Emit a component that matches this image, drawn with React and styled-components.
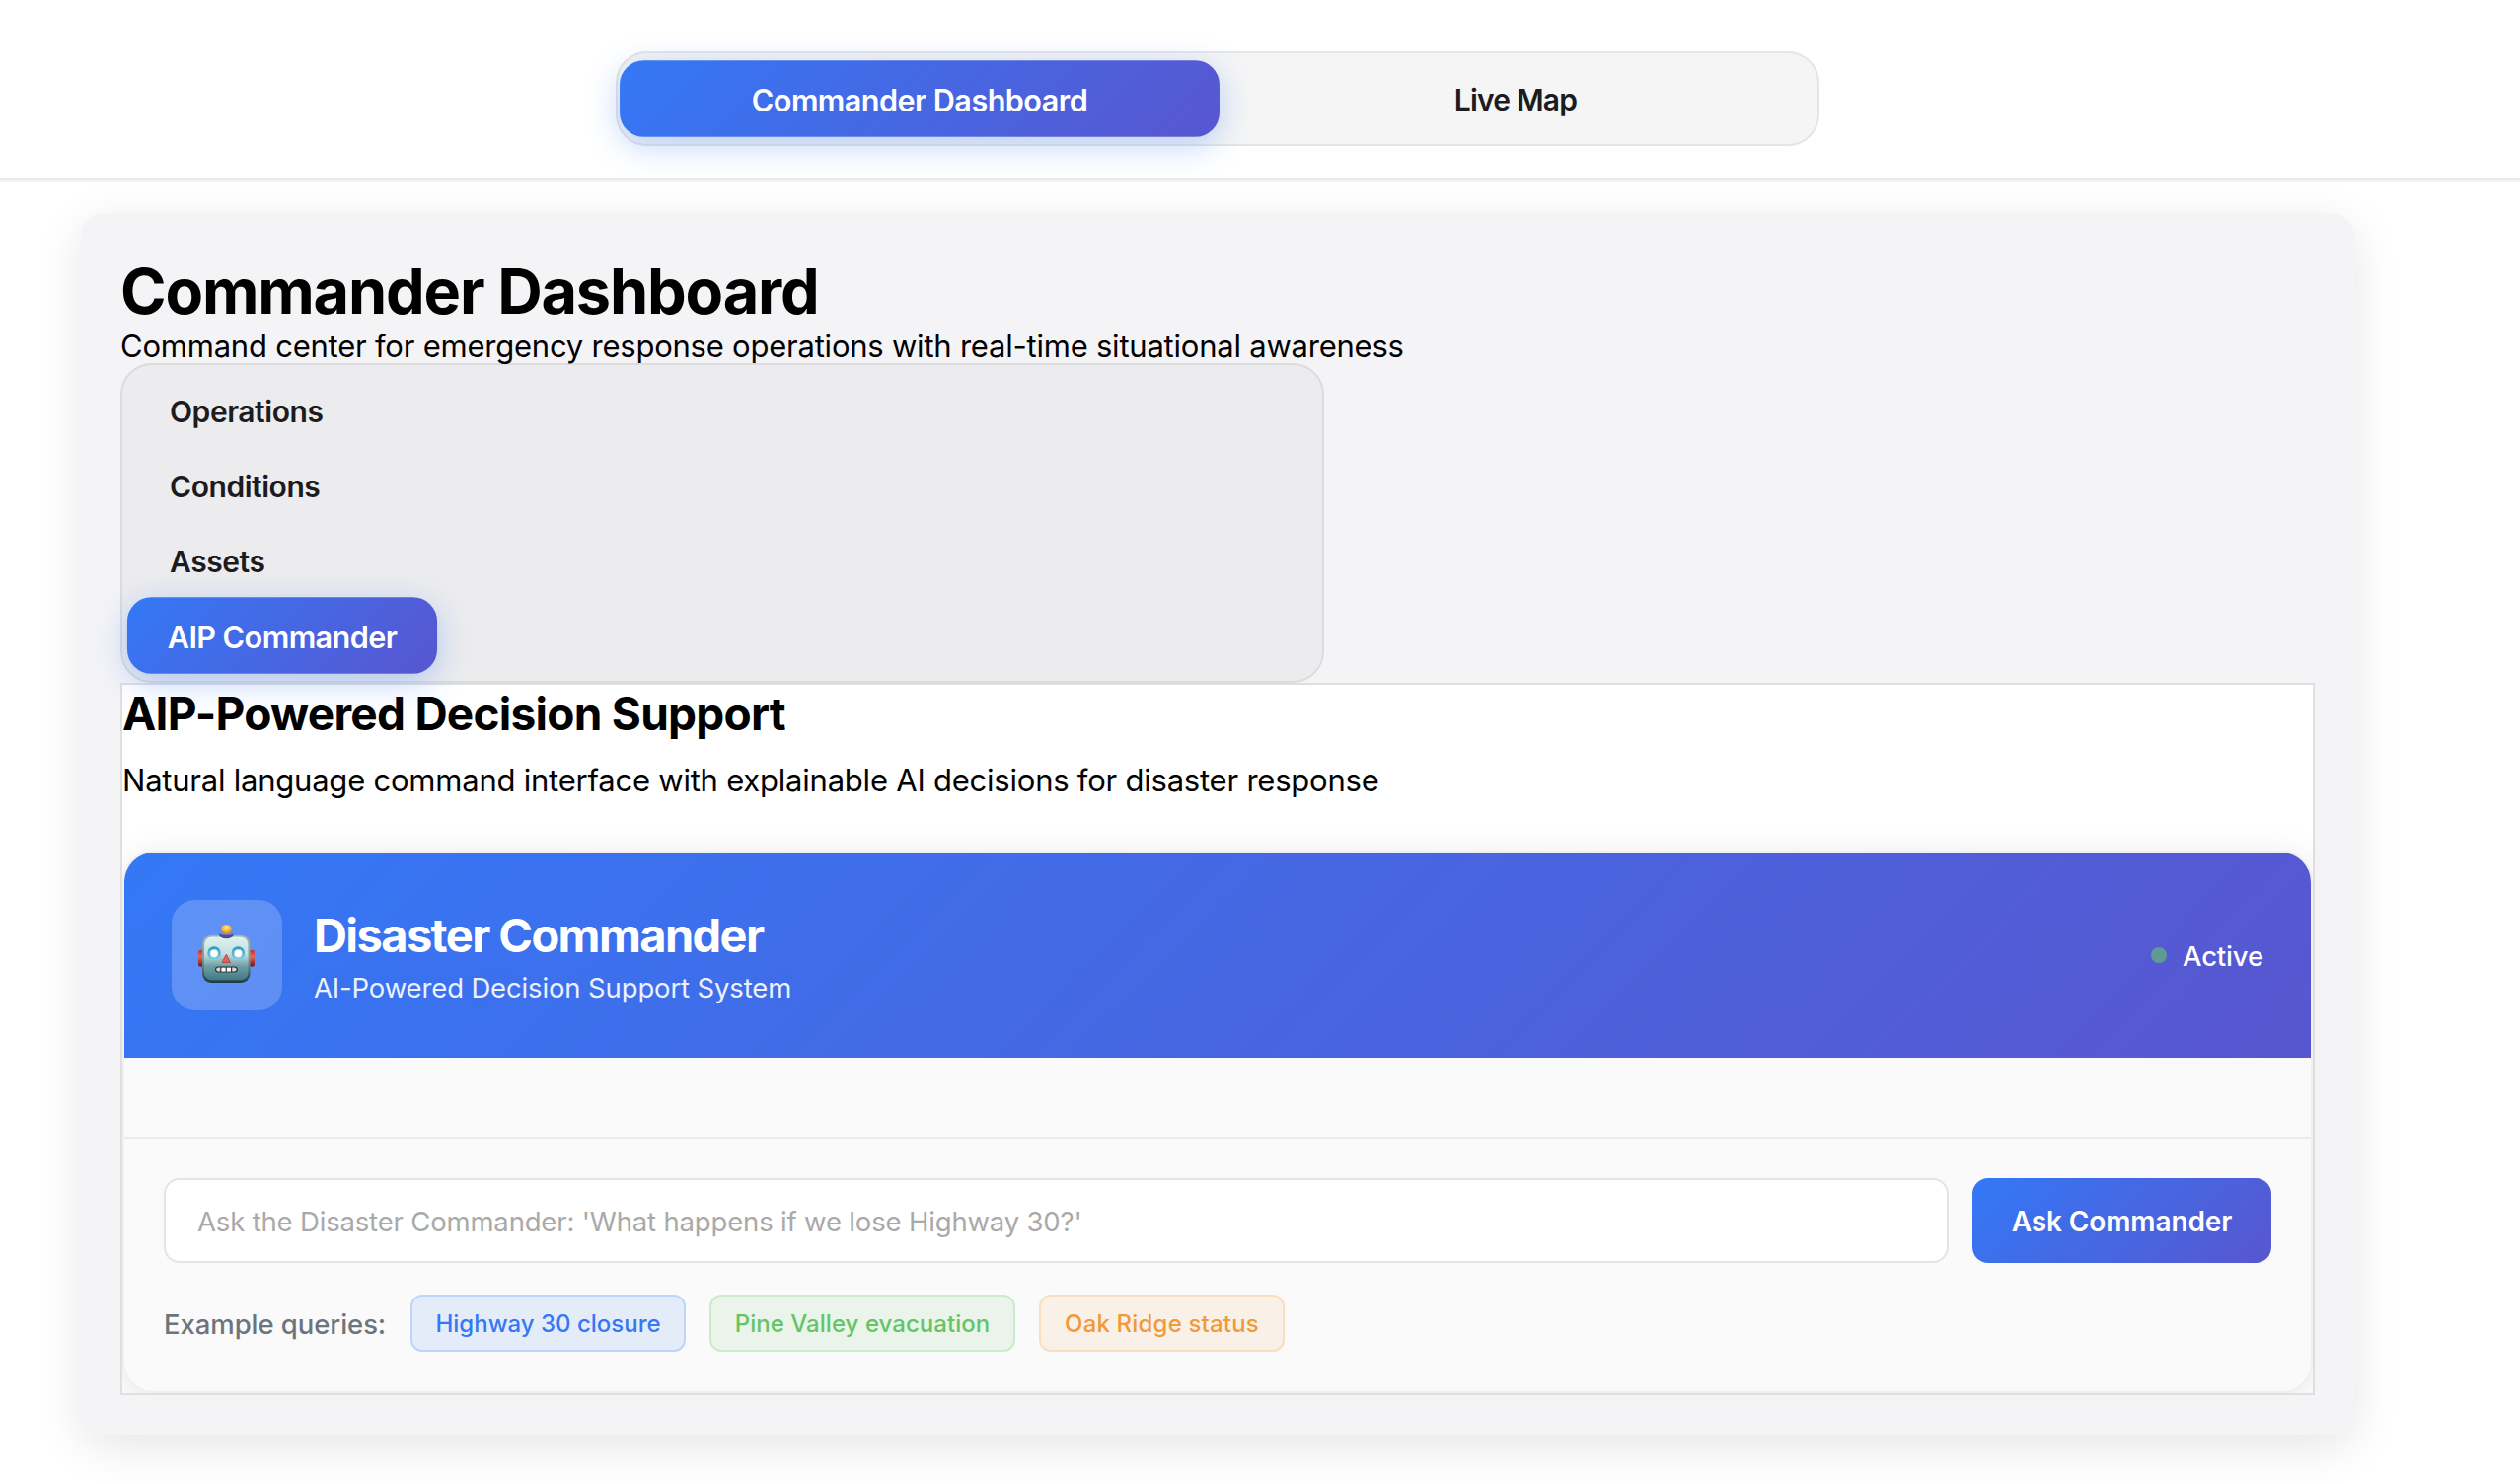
import React from "react";
import styled, { createGlobalStyle, css } from "styled-components";

const gradient = "linear-gradient(135deg, #3478f6 0%, #5856cf 100%)";

const GlobalStyle = createGlobalStyle`
  * { box-sizing: border-box; }
  body {
    margin: 0;
    background: #fff;
    color: #000;
    font-family: Inter, "Liberation Sans", sans-serif;
  }
  h1, h2, h3, p { margin: 0; }
  button, input { font-family: inherit; margin: 0; }
`;

const Page = styled.div`
  min-height: 1504px;
  overflow: hidden;
`;

const TopBar = styled.header`
  height: 184px;
  padding-top: 52px;
  border-bottom: 2px solid #f3f3f3;
  box-shadow: inset 0 -2px 0 #eaeaea;
`;

const Centered = styled.div`
  width: 2468px;
  display: flex;
  justify-content: center;
`;

const MainTabs = styled.nav`
  display: grid;
  grid-template-columns: 1fr 1fr;
  gap: 8px;
  width: 1220px;
  height: 96px;
  padding: 8px;
  border: 2px solid #e5e5e5;
  border-radius: 32px;
  background: #f5f5f5;
`;

const TabButton = styled.button`
  height: 76px;
  padding: 2px 40px 0;
  border: 0;
  border-radius: 24px;
  background: transparent;
  color: #1c1c1e;
  font-size: 30px;
  font-weight: 600;
  line-height: 36px;
  letter-spacing: ${(p) => p.$tracking || "-0.45px"};
  white-space: nowrap;
  ${(p) =>
    p.$active &&
    css`
      padding-top: 3px;
      background: ${gradient};
      color: #fff;
      transform: scale(1.02);
      box-shadow: 0 8px 32px rgba(52, 120, 246, 0.32);
    `}
`;

const Panel = styled.main`
  width: 2304px;
  margin-top: 32px;
  padding: 40px;
  border-radius: 24px;
  background: #f4f4f7;
  box-shadow: 0 12px 48px rgba(0, 0, 0, 0.1);
`;

const PanelTitle = styled.h1`
  font-size: 63px;
  font-weight: 700;
  line-height: 78px;
  letter-spacing: -1.17px;
`;

const PanelSubtitle = styled.p`
  font-size: 31px;
  line-height: 34px;
  letter-spacing: -0.225px;
`;

const SideTabs = styled.nav`
  display: flex;
  flex-direction: column;
  align-items: flex-start;
  width: 1220px;
  padding: 8px;
  border: 2px solid #dcdcde;
  border-radius: 32px;
  background: #ececee;
`;

const Section = styled.section`
  overflow: hidden;
  border: 2px solid #dfdfe0;
  background: #fff;
`;

const SectionTitle = styled.h2`
  font-size: 46px;
  font-weight: 700;
  line-height: 58px;
  letter-spacing: -0.75px;
`;

const SectionText = styled.p`
  margin: 15px 0 47px;
  font-size: 31px;
  line-height: 48px;
  letter-spacing: -0.225px;
`;

const Card = styled.article`
  overflow: hidden;
  border: 2px solid #f0f0f0;
  border-radius: 32px;
  background: #fafafa;
  box-shadow: 0 8px 40px rgba(0, 0, 0, 0.1);
`;

const CardHeader = styled.header`
  display: flex;
  align-items: center;
  gap: 32px;
  height: 208px;
  padding: 48px;
  background: ${gradient};
  color: #fff;
`;

const Avatar = styled.div`
  display: flex;
  align-items: center;
  justify-content: center;
  width: 112px;
  height: 112px;
  border-radius: 24px;
  background: rgba(255, 255, 255, 0.2);
`;

const Heading = styled.div`
  display: flex;
  flex: 1;
  flex-direction: column;
  gap: 2px;
`;

const CardTitle = styled.h3`
  font-size: 47px;
  font-weight: 700;
  line-height: 64px;
  letter-spacing: -1.6px;
`;

const CardSubtitle = styled.p`
  font-size: 27.5px;
  line-height: 38px;
  letter-spacing: -0.14px;
  opacity: 0.9;
`;

const Status = styled.div`
  display: flex;
  align-items: center;
  gap: 16px;
  font-size: 27.5px;
  font-weight: 500;
  line-height: 36px;
  letter-spacing: -0.15px;
`;

const StatusLabel = styled.span`
  padding-top: 2px;
`;

const StatusDot = styled.span`
  width: 16px;
  height: 16px;
  border-radius: 50%;
  background: #5f9a94;
`;

const Messages = styled.div`
  height: 80px;
`;

const Composer = styled.footer`
  display: flex;
  flex-direction: column;
  gap: 32px;
  padding: 40px;
  border-top: 2px solid #eaeaea;
`;

const AskRow = styled.form`
  display: flex;
  gap: 24px;
`;

const QueryInput = styled.input`
  flex: 1;
  height: 86px;
  padding: 2px 32px 0;
  border: 2px solid #e4e4e4;
  border-radius: 16px;
  outline: 0;
  background: #fff;
  font-size: 27.5px;
  letter-spacing: -0.17px;
  &::placeholder { color: #a9a9a9; opacity: 1; }
`;

const AskButton = styled.button`
  width: 303px;
  height: 86px;
  padding: 2px 0 0;
  border: 0;
  border-radius: 16px;
  background: ${gradient};
  color: #fff;
  font-size: 28px;
  font-weight: 600;
  letter-spacing: -0.1px;
`;

const Examples = styled.div`
  display: flex;
  align-items: center;
  gap: 24px;
`;

const ExamplesLabel = styled.span`
  width: 226px;
  padding-top: 1px;
  color: #6c757d;
  font-size: 27.5px;
  font-weight: 500;
  letter-spacing: -0.07px;
  white-space: nowrap;
`;

const tones = {
  blue: ["#3478f6", "#e5ecf9", "#bfd4fa"],
  green: ["#65c466", "#eaf4ea", "#cdeacd"],
  orange: ["#f19a37", "#f9f1e7", "#f8dfc0"],
};

const Chip = styled.button`
  width: ${(p) => p.$width}px;
  height: 58px;
  padding: 0;
  border: 2px solid ${(p) => tones[p.$tone][2]};
  border-radius: 12px;
  background: ${(p) => tones[p.$tone][1]};
  color: ${(p) => tones[p.$tone][0]};
  font-size: 24px;
  font-weight: 500;
  letter-spacing: ${(p) => p.$tracking}px;
  white-space: nowrap;
`;

function Robot() {
  return (
    <svg width="64" height="64" viewBox="0 0 64 64" aria-hidden="true">
      <defs>
        <linearGradient id="face" x1="0" y1="0" x2="0" y2="1">
          <stop offset="0" stopColor="#dcf3f1" />
          <stop offset="0.4" stopColor="#c3dfe0" />
          <stop offset="0.68" stopColor="#6d9ea5" />
          <stop offset="1" stopColor="#437983" />
        </linearGradient>
        <linearGradient id="rim" x1="0" y1="0" x2="0" y2="1">
          <stop offset="0" stopColor="#a3b3ab" />
          <stop offset="0.5" stopColor="#7d9a9b" />
          <stop offset="1" stopColor="#173e49" />
        </linearGradient>
        <linearGradient id="ear" x1="0" y1="0" x2="0" y2="1">
          <stop offset="0" stopColor="#cf2b24" />
          <stop offset="0.4" stopColor="#e0685e" />
          <stop offset="1" stopColor="#7c0d0c" />
        </linearGradient>
        <radialGradient id="bulb" cx="0.5" cy="0.35" r="0.65">
          <stop offset="0" stopColor="#fff3a6" />
          <stop offset="0.5" stopColor="#fbbe35" />
          <stop offset="1" stopColor="#e58718" />
        </radialGradient>
        <linearGradient id="eye" x1="0" y1="0" x2="0" y2="1">
          <stop offset="0" stopColor="#2497c6" />
          <stop offset="1" stopColor="#78cfe6" />
        </linearGradient>
      </defs>
      <rect x="3" y="27" width="6" height="16.5" rx="2" fill="url(#ear)" />
      <rect x="54" y="27" width="6" height="16.5" rx="2" fill="url(#ear)" />
      <rect x="7" y="11.7" width="48.5" height="48.3" rx="9" fill="url(#rim)" />
      <rect x="9" y="13.5" width="44.5" height="43.8" rx="7.5" fill="url(#face)" />
      <path d="M23.7 10.4Q31.4 13 39 10.4Q38 15.2 31.4 15.2Q24.8 15.2 23.7 10.4Z" fill="#58498a" />
      <ellipse cx="31.4" cy="5.7" rx="5.4" ry="4.8" fill="url(#bulb)" />
      <circle cx="19" cy="30" r="6.8" fill="url(#eye)" />
      <circle cx="43.4" cy="30" r="6.8" fill="url(#eye)" />
      <circle cx="19" cy="30.4" r="4.1" fill="#fff" stroke="#a9bfc6" strokeWidth="0.7" />
      <circle cx="43.4" cy="30.4" r="4.1" fill="#fff" stroke="#a9bfc6" strokeWidth="0.7" />
      <path d="M31.3 31.2L35.4 39.5H27.2Z" fill="#de625c" stroke="#b94a49" strokeWidth="1" strokeLinejoin="round" />
      <rect x="20" y="43.6" width="22.8" height="6" rx="3" fill="#25363b" />
      <path d="M23.5 44.6H25.2V48.6H23.5Q21.2 48.4 21.2 46.6Q21.2 44.8 23.5 44.6Z" fill="#d9d5c9" />
      <rect x="26.4" y="44.6" width="4.2" height="4" fill="#fffdf2" />
      <rect x="31.8" y="44.6" width="4.2" height="4" fill="#fffdf2" />
      <path d="M37.2 44.6H39.2Q41.6 44.8 41.6 46.6Q41.6 48.4 39.2 48.6H37.2Z" fill="#d9d5c9" />
    </svg>
  );
}

export default function App() {
  return (
    <Page>
      <GlobalStyle />
      <TopBar>
        <Centered>
          <MainTabs>
            <TabButton $active $tracking="-0.55px">Commander Dashboard</TabButton>
            <TabButton $tracking="-0.8px">Live Map</TabButton>
          </MainTabs>
        </Centered>
      </TopBar>
      <Centered>
        <Panel>
          <PanelTitle>Commander Dashboard</PanelTitle>
          <PanelSubtitle>
            Command center for emergency response operations with real-time situational awareness
          </PanelSubtitle>
          <SideTabs>
            <TabButton>Operations</TabButton>
            <TabButton>Conditions</TabButton>
            <TabButton>Assets</TabButton>
            <TabButton $active $tracking="-0.56px">AIP Commander</TabButton>
          </SideTabs>
          <Section>
            <SectionTitle>AIP-Powered Decision Support</SectionTitle>
            <SectionText>
              Natural language command interface with explainable AI decisions for disaster response
            </SectionText>
            <Card>
              <CardHeader>
                <Avatar>
                  <Robot />
                </Avatar>
                <Heading>
                  <CardTitle>Disaster Commander</CardTitle>
                  <CardSubtitle>AI-Powered Decision Support System</CardSubtitle>
                </Heading>
                <Status>
                  <StatusDot />
                  <StatusLabel>Active</StatusLabel>
                </Status>
              </CardHeader>
              <Messages />
              <Composer>
                <AskRow onSubmit={(e) => e.preventDefault()}>
                  <QueryInput placeholder="Ask the Disaster Commander: 'What happens if we lose Highway 30?'" />
                  <AskButton>Ask Commander</AskButton>
                </AskRow>
                <Examples>
                  <ExamplesLabel>Example queries:</ExamplesLabel>
                  <Chip $tone="blue" $width={279} $tracking={0}>Highway 30 closure</Chip>
                  <Chip $tone="green" $width={310} $tracking={0.04}>Pine Valley evacuation</Chip>
                  <Chip $tone="orange" $width={249} $tracking={0.18}>Oak Ridge status</Chip>
                </Examples>
              </Composer>
            </Card>
          </Section>
        </Panel>
      </Centered>
    </Page>
  );
}
